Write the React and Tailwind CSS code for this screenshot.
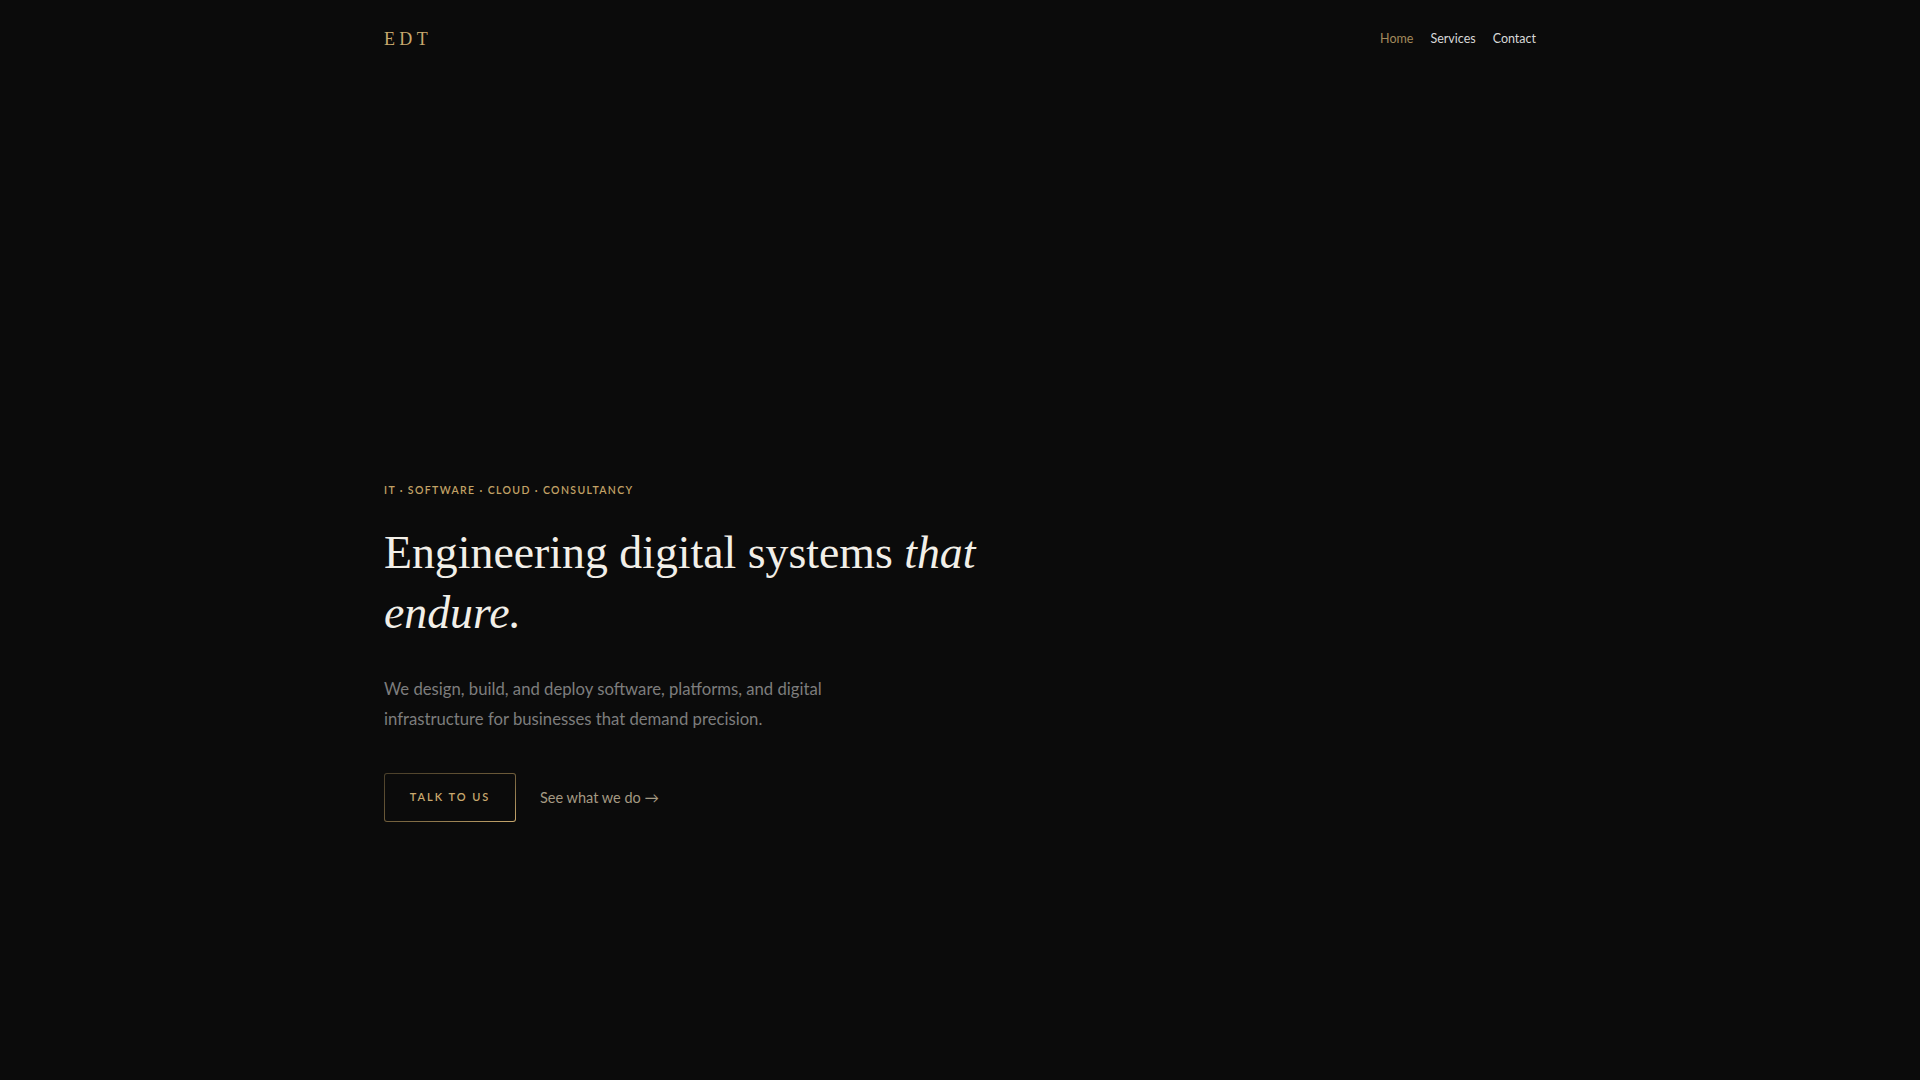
import React from "react";

const navLinks = [
  { label: "Home", active: true },
  { label: "Services" },
  { label: "Contact" },
];

const sans = "font-['Lato','Inter',sans-serif]";
const serif = "font-['Liberation_Serif','Times_New_Roman',serif]";

const App = () => {
  return (
    <div className={`min-h-screen bg-[#0b0b0b] ${sans}`}>
      <header className="mx-auto flex h-[78px] max-w-[1152px] items-center justify-between">
        <a className={`${serif} text-[18px] tracking-[0.24em] text-[#c9a96e]`}>EDT</a>
        <nav className="flex items-center gap-[17px] text-[12.5px]">
          {navLinks.map((link) => (
            <a
              key={link.label}
              className={link.active ? "text-[#a38a5c]" : "text-[#d8d8d8]"}
            >
              {link.label}
            </a>
          ))}
        </nav>
      </header>

      <main className="mx-auto max-w-[1152px] pt-[405px]">
        <p className="text-[10.5px] font-semibold leading-[14px] tracking-[0.13em] text-[#c2a266]">
          IT · SOFTWARE · CLOUD · CONSULTANCY
        </p>

        <h1 className={`${serif} mt-[26px] max-w-[620px] text-[45.8px] font-normal leading-[60px] text-[#f2efe8]`}>
          Engineering digital systems <em>that endure.</em>
        </h1>

        <p className="mt-[32px] max-w-[470px] text-[16.7px] leading-[29.5px] text-[#7d7d7d]">
          We design, build, and deploy software, platforms, and digital infrastructure for businesses that
          demand precision.
        </p>

        <div className="mt-[39px] flex items-center gap-[24px]">
          <a className="rounded-[3px] bg-gradient-to-br from-[#4a3f2a] via-[#6e5c3a] to-[#c9a96e] p-px">
            <span className="flex h-[47px] w-[130px] items-center justify-center rounded-[2px] bg-[#0b0b0b] text-[11px] font-semibold tracking-[0.18em] text-[#c9a96e]">
              TALK TO US
            </span>
          </a>
          <a className="text-[14.5px] text-[#a59a83]">See what we do →</a>
        </div>
      </main>
    </div>
  );
};

export default App;
